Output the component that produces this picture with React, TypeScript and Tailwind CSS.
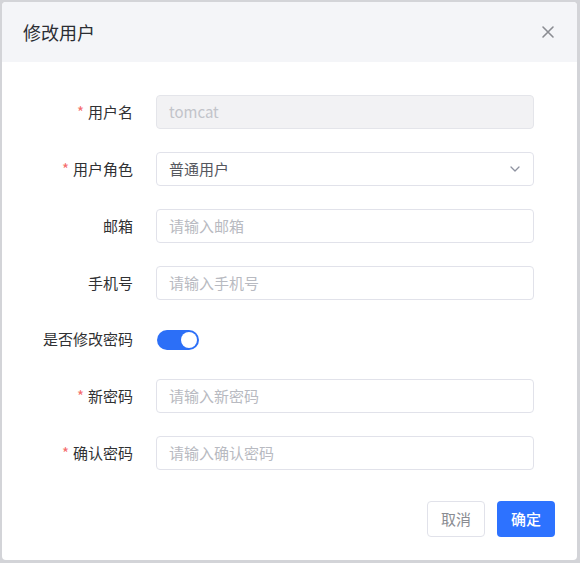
import { useState } from "react";

const FONT = { fontFamily: '"Noto Sans CJK SC", "Noto Sans", sans-serif' };

function Label({ text, required }: { text: string; required?: boolean }) {
  return (
    <div className="w-[131px] shrink-0 text-right text-[15px] text-[#303133]">
      {required && <span className="mr-[4px] text-[#f56c6c]">*</span>}
      {text}
    </div>
  );
}

function Field({ placeholder }: { placeholder: string }) {
  return (
    <div className="flex h-[34px] flex-1 items-center rounded-[4px] border border-[#e1e2ea] bg-white px-[12px] text-[15px] text-[#b8bac1]">
      {placeholder}
    </div>
  );
}

export default function App() {
  const [changePwd, setChangePwd] = useState(true);

  return (
    <div className="h-[563px] w-[580px] bg-[#d3d4d8] p-[2px] pb-[3px]" style={FONT}>
      <div className="flex h-full w-[575px] flex-col overflow-hidden rounded-[4px] bg-white">
        <div className="flex h-[60px] shrink-0 items-center justify-between bg-[#f4f5f8] pl-[21px] pr-[22px]">
          <span className="text-[18px] text-[#2b2d33]">修改用户</span>
          <svg width="14" height="14" viewBox="0 0 14 14" className="text-[#8a8c92]">
            <path d="M2 2 L12 12 M12 2 L2 12" stroke="currentColor" strokeWidth="1.6" strokeLinecap="round" />
          </svg>
        </div>

        <div className="flex flex-col gap-[23px] pr-[43px] pt-[33px]">
          <div className="flex items-center gap-[23px]">
            <Label text="用户名" required />
            <div className="flex h-[34px] flex-1 items-center rounded-[4px] border border-[#e4e5ea] bg-[#f2f2f4] px-[12px] text-[15px] text-[#c2c4ca]">
              tomcat
            </div>
          </div>
          <div className="flex items-center gap-[23px]">
            <Label text="用户角色" required />
            <div className="flex h-[34px] flex-1 items-center justify-between rounded-[4px] border border-[#e1e2ea] bg-white pl-[12px] pr-[12px] text-[15px] text-[#55575e]">
              普通用户
              <svg width="12" height="12" viewBox="0 0 12 12">
                <path d="M2 4 L6 8 L10 4" fill="none" stroke="#8e92a0" strokeWidth="1.3" strokeLinecap="round" strokeLinejoin="round" />
              </svg>
            </div>
          </div>
          <div className="flex items-center gap-[23px]">
            <Label text="邮箱" />
            <Field placeholder="请输入邮箱" />
          </div>
          <div className="flex items-center gap-[23px]">
            <Label text="手机号" />
            <Field placeholder="请输入手机号" />
          </div>
          <div className="flex h-[33px] items-center gap-[24px]">
            <Label text="是否修改密码" />
            <button
              type="button"
              onClick={() => setChangePwd(!changePwd)}
              className={`flex h-[20px] w-[42px] items-center rounded-full p-[2px] ${
                changePwd ? "justify-end bg-[#2c6ff7]" : "justify-start bg-[#dcdfe6]"
              }`}
            >
              <span className="h-[16px] w-[16px] rounded-full bg-white" />
            </button>
          </div>
          <div className="flex items-center gap-[23px]">
            <Label text="新密码" required />
            <Field placeholder="请输入新密码" />
          </div>
          <div className="flex items-center gap-[23px]">
            <Label text="确认密码" required />
            <Field placeholder="请输入确认密码" />
          </div>
        </div>

        <div className="mt-[31px] flex justify-end gap-[12px] pr-[22px]">
          <button
            type="button"
            className="h-[36px] w-[58px] rounded-[4px] border border-[#e1e2ea] bg-white text-[15px] text-[#8a8c92]"
          >
            取消
          </button>
          <button
            type="button"
            className="h-[36px] w-[58px] rounded-[4px] bg-[#2d72ff] text-[15px] font-medium text-white"
          >
            确定
          </button>
        </div>
      </div>
    </div>
  );
}
